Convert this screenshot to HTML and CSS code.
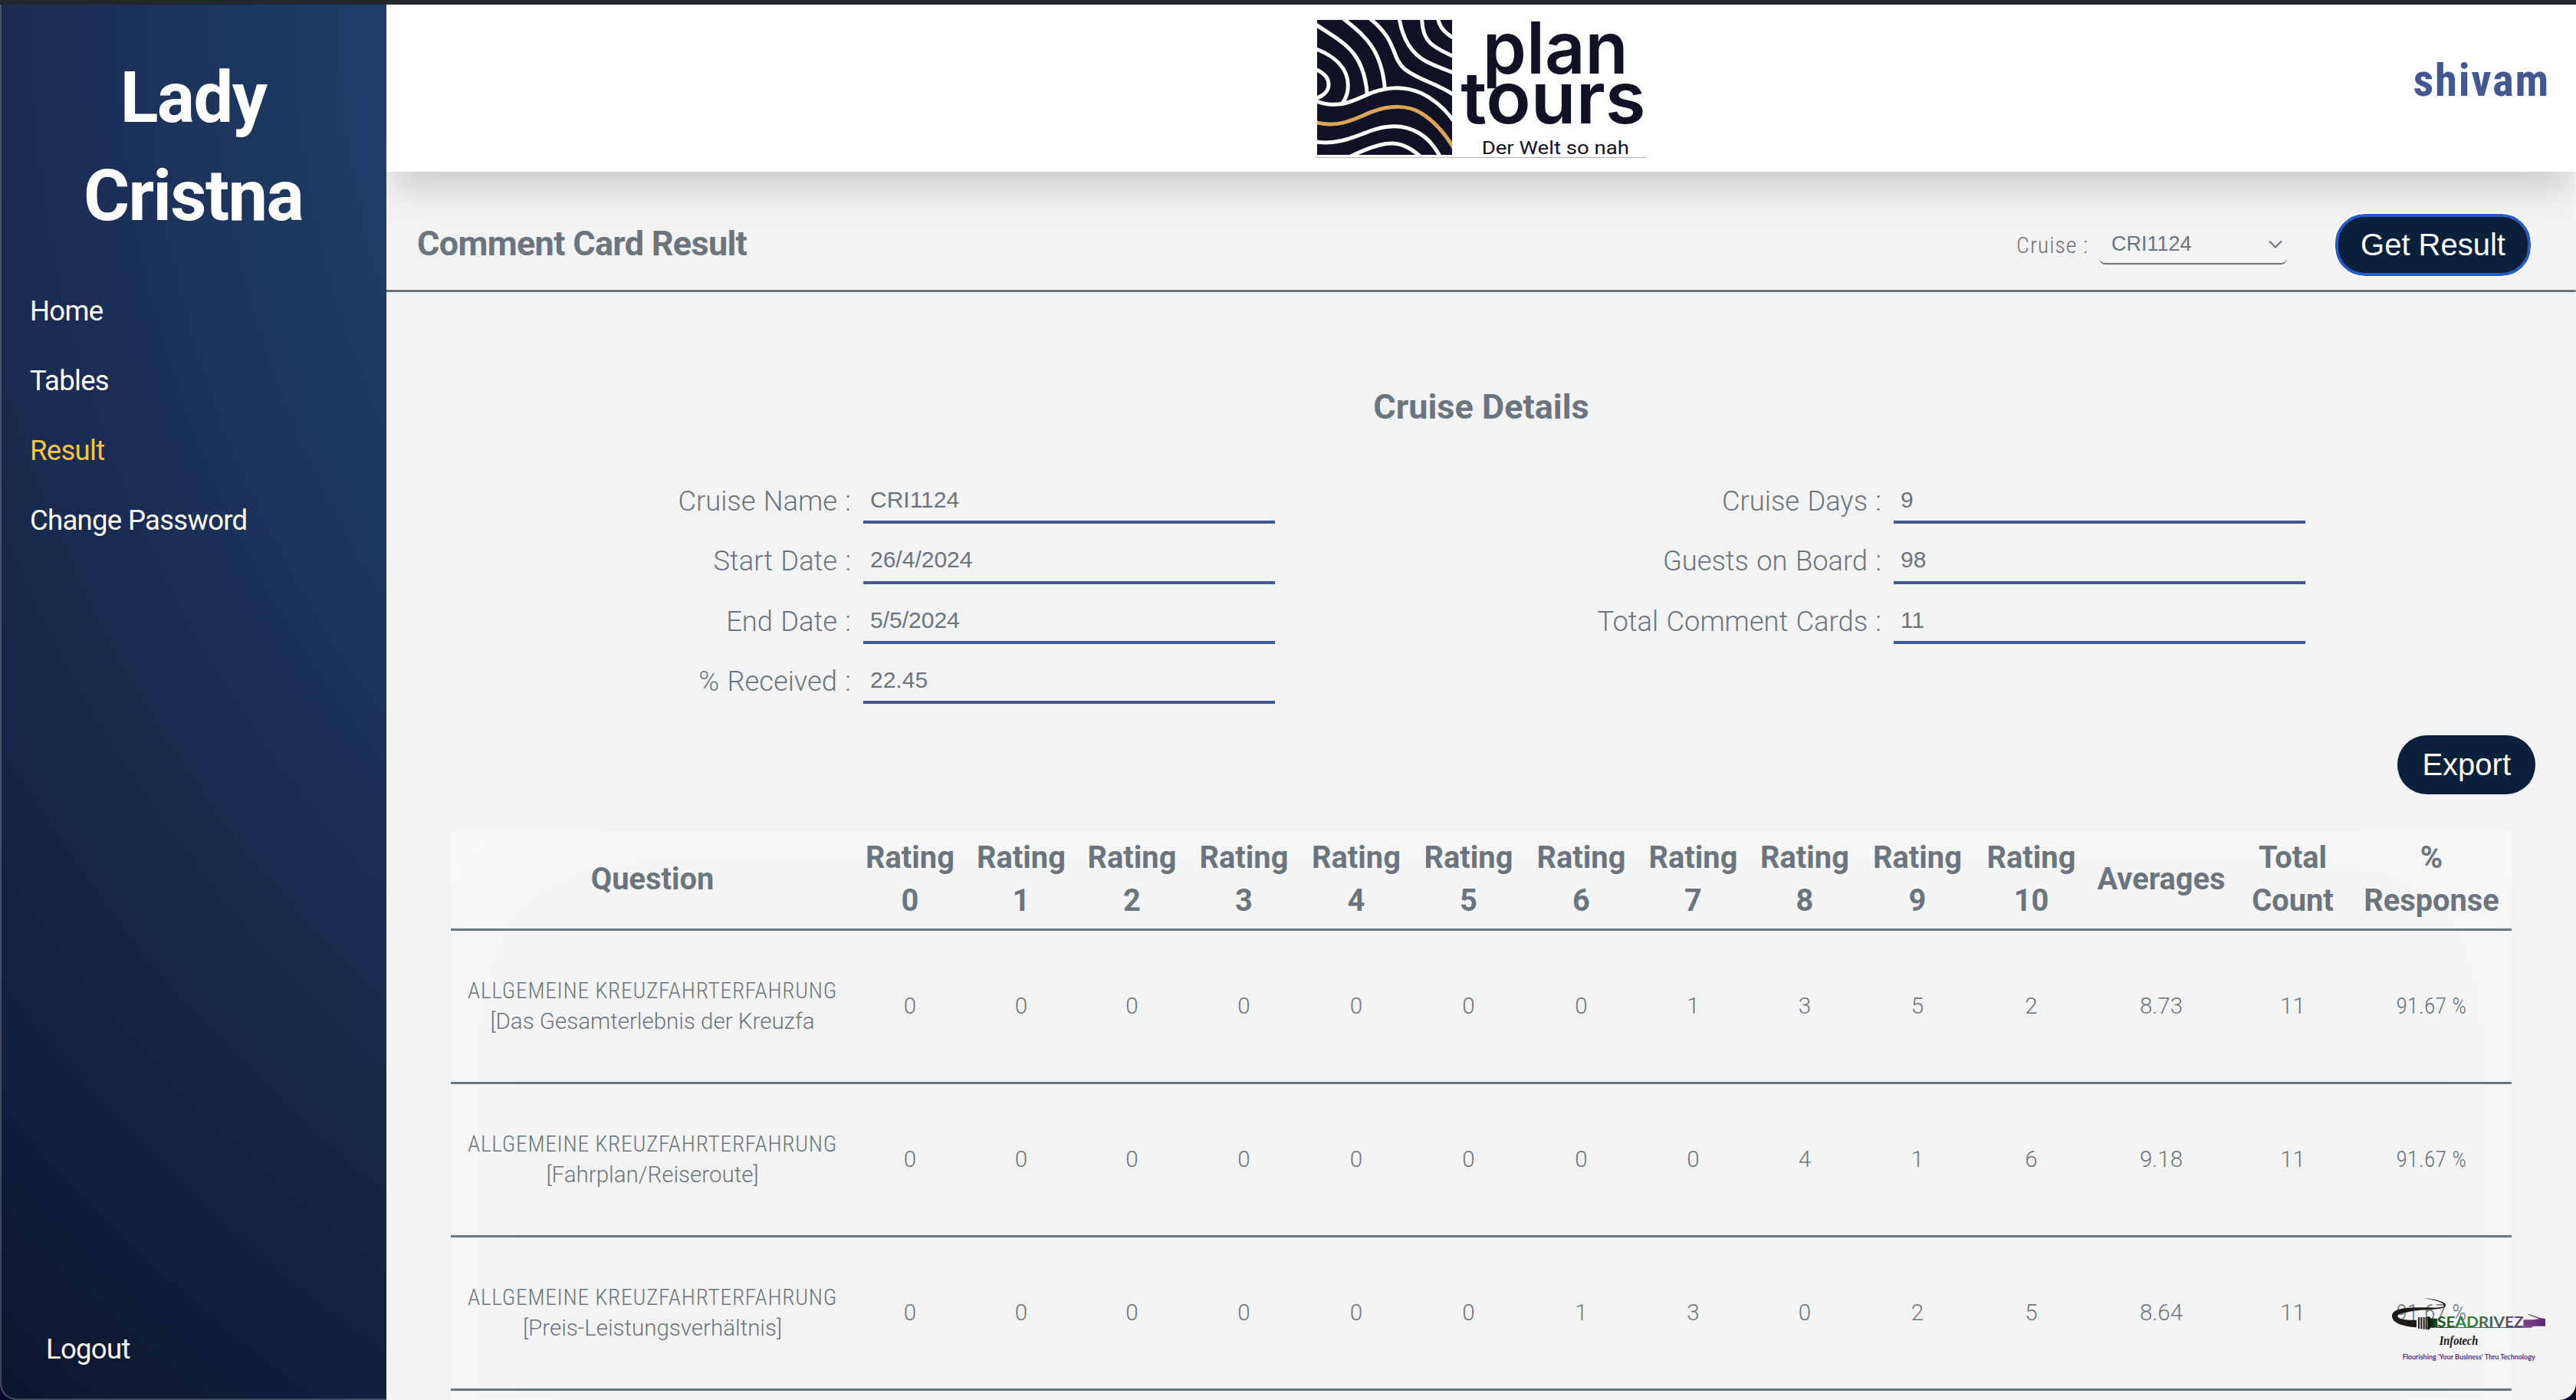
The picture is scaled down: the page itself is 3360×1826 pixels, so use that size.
FILE: index.html
```html
<!DOCTYPE html>
<html lang="en">
<head>
<meta charset="utf-8">
<title>Comment Card Result</title>
<link rel="stylesheet" href="styles.css">
</head>
<body>
<div class="window">
  <aside class="sidebar">
    <h1 class="ship">Lady<br>Cristna</h1>
    <nav class="nav">
      <a class="nav-link">Home</a>
      <a class="nav-link">Tables</a>
      <a class="nav-link active">Result</a>
      <a class="nav-link">Change Password</a>
    </nav>
    <a class="logout">Logout</a>
  </aside>

  <main class="main">
    <header class="header">
      <svg class="logo" viewBox="81 18 1290 654">
        <defs><clipPath id="tile"><rect x="84" y="78" width="528" height="528"/></clipPath></defs>
        <rect x="84" y="78" width="528" height="528" fill="#111226"/>
        <g clip-path="url(#tile)" fill="none" stroke="#fff" stroke-width="15">
          <path d="M76 94C180 165 268 195 280 372"/>
          <path d="M186 72C270 140 335 190 349 345"/>
          <path d="M290 72C400 160 372 222 425 269C485 316 545 322 620 372"/>
          <path d="M405 70C418 150 450 208 510 240C550 260 580 270 620 286"/>
          <path d="M494 70C494 160 530 182 620 222"/>
          <path d="M556 70C563 108 585 130 620 150"/>
          <path d="M76 190C150 218 205 265 205 335C205 365 195 388 182 405"/>
          <path d="M76 270C120 290 129 310 129 332C129 355 110 375 76 386"/>
          <path d="M76 394C175 432 230 390 300 362C370 337 430 337 490 364C540 388 582 422 620 476"/>
          <path d="M76 478C170 505 240 460 300 437C370 411 440 411 490 442C540 472 580 515 620 582" stroke="#dba656"/>
          <path d="M76 554C160 570 240 532 290 513C360 487 425 487 480 519C520 543 540 568 566 614"/>
          <path d="M215 612C290 575 340 560 380 561C420 563 450 580 488 612"/>
        </g>
        <g fill="#111226">
          <text class="word" x="731" y="287" textLength="570" lengthAdjust="spacingAndGlyphs">plan</text>
          <text class="word" x="646" y="483" textLength="724" lengthAdjust="spacingAndGlyphs">tours</text>
          <text class="claim" x="728" y="604" textLength="577" lengthAdjust="spacingAndGlyphs">Der Welt so nah</text>
        </g>
        <rect x="81" y="615" width="1290" height="3" fill="#b4b4b8"/>
      </svg>
      <span class="user">shivam</span>
    </header>

    <section class="toolbar">
      <h2 class="page-title">Comment Card Result</h2>
      <span class="cruise-label">Cruise :</span>
      <div class="select">CRI1124
        <svg class="chevron" viewBox="0 0 18 12"><path d="M1 1.5L9 9.5L17 1.5" fill="none" stroke="#6c757d" stroke-width="2"/></svg>
      </div>
      <button class="btn focused">Get Result</button>
    </section>

    <h3 class="details-title">Cruise Details</h3>
    <div class="details">
      <span class="label">Cruise Name :</span><span class="value">CRI1124</span>
      <span class="label">Cruise Days :</span><span class="value">9</span>
      <span class="label">Start Date :</span><span class="value">26/4/2024</span>
      <span class="label">Guests on Board :</span><span class="value">98</span>
      <span class="label">End Date :</span><span class="value">5/5/2024</span>
      <span class="label">Total Comment Cards :</span><span class="value">11</span>
      <span class="label">% Received :</span><span class="value">22.45</span>
    </div>

    <div class="actions"><button class="btn">Export</button></div>

    <div class="table-wrap">
      <table class="results">
        <colgroup>
          <col class="c-question"><col class="c0"><col class="c1"><col class="c2"><col class="c3"><col class="c4"><col class="c5"><col class="c6"><col class="c7"><col class="c8"><col class="c9"><col class="c10"><col class="c-avg"><col class="c-total"><col class="c-resp">
        </colgroup>
        <thead>
          <tr><th>Question</th><th>Rating<br>0</th><th>Rating<br>1</th><th>Rating<br>2</th><th>Rating<br>3</th><th>Rating<br>4</th><th>Rating<br>5</th><th>Rating<br>6</th><th>Rating<br>7</th><th>Rating<br>8</th><th>Rating<br>9</th><th>Rating<br>10</th><th>Averages</th><th>Total<br>Count</th><th>%<br>Response</th></tr>
        </thead>
        <tbody>
          <tr><td><div class="group">ALLGEMEINE KREUZFAHRTERFAHRUNG</div><div class="item">[Das Gesamterlebnis der Kreuzfa</div></td><td>0</td><td>0</td><td>0</td><td>0</td><td>0</td><td>0</td><td>0</td><td>1</td><td>3</td><td>5</td><td>2</td><td>8.73</td><td>11</td><td class="pct">91.67 %</td></tr>
          <tr><td><div class="group">ALLGEMEINE KREUZFAHRTERFAHRUNG</div><div class="item">[Fahrplan/Reiseroute]</div></td><td>0</td><td>0</td><td>0</td><td>0</td><td>0</td><td>0</td><td>0</td><td>0</td><td>4</td><td>1</td><td>6</td><td>9.18</td><td>11</td><td class="pct">91.67 %</td></tr>
          <tr><td><div class="group">ALLGEMEINE KREUZFAHRTERFAHRUNG</div><div class="item">[Preis-Leistungsverhältnis]</div></td><td>0</td><td>0</td><td>0</td><td>0</td><td>0</td><td>0</td><td>1</td><td>3</td><td>0</td><td>2</td><td>5</td><td>8.64</td><td>11</td><td class="pct">91.67 %</td></tr>
        </tbody>
      </table>
    </div>
  </main>

  <svg class="watermark" viewBox="0 0 720 330">
    <defs>
      <linearGradient id="word" gradientUnits="userSpaceOnUse" x1="237" y1="0" x2="575" y2="0">
        <stop offset="0" stop-color="#154a28"/><stop offset=".33" stop-color="#2f8a42"/><stop offset=".62" stop-color="#3f5f60"/><stop offset="1" stop-color="#6c4784"/>
      </linearGradient>
      <linearGradient id="cuff"><stop offset="0" stop-color="#06120b"/><stop offset="1" stop-color="#17552b"/></linearGradient>
      <linearGradient id="plug"><stop offset="0" stop-color="#80468a"/><stop offset="1" stop-color="#5b2779"/></linearGradient>
    </defs>
    <path fill="#1d1a17" d="M178 39C225 41 276 54 270 70C262 88 180 82 130 92C100 98 80 101 82 112C90 126 130 126 156 125V154C100 150 60 136 60 108C62 84 100 78 150 76C200 75 262 80 264 68C262 56 220 44 178 39Z"/>
    <path fill="#1d1a17" d="M162 115h6v43h-6zM172 114h6v46h-6zM182 114h6v47h-6zM191 113h6v49h-6z"/>
    <path fill="url(#cuff)" d="M199 112L207 112L212 119H238V155H212L204 163H199Z"/>
    <text class="brand" x="237" y="153" textLength="338" lengthAdjust="spacingAndGlyphs" fill="url(#word)">SEADRIVEZ</text>
    <rect x="237" y="153" width="338" height="3" fill="url(#word)"/>
    <path fill="url(#plug)" d="M574 124H610L636 121L592 104L596 102L640 117L660 120V149H612L605 155H574Z"/>
    <text class="script" x="245" y="223" textLength="152" lengthAdjust="spacingAndGlyphs">Infotech</text>
    <text class="tagline" x="101" y="279" textLength="519" lengthAdjust="spacingAndGlyphs">Flourishing 'Your Business' Thru Technology</text>
  </svg>
  <div class="frame"></div>
</div>
</body>
</html>
```
FILE: styles.css
```css
* { box-sizing: border-box; margin: 0; padding: 0; }

body {
  background: #07072a;
  overflow: hidden;
  font-family: Roboto, "Liberation Sans", sans-serif;
  color: #6c757d;
}

.window {
  position: relative;
  display: flex;
  width: 3360px;
  height: 1826px;
  border-top: 6px solid #21272a;
  border-radius: 0 0 22px 22px;
  overflow: hidden;
  background: #f3f3f3;
}

.frame {
  position: absolute;
  z-index: 2;
  inset: 0;
  border: 2px solid rgba(255, 255, 255, .2);
  border-top: 0;
  border-radius: 0 0 22px 22px;
}

/* Sidebar */
.sidebar {
  position: relative;
  z-index: 1;
  display: flex;
  flex-direction: column;
  flex: 0 0 504px;
  padding: 58px 0 36px;
  color: #fff;
  background: radial-gradient(circle 2510px at 1711px 0, #203e6b 48%, #1c375f 55.6%, #1b2d55 66%, #152746 77%, #12203e 87%, #0b152d 100%);
}

.ship {
  font-size: 92px;
  font-weight: 700;
  letter-spacing: -1.6px;
  line-height: 127.5px;
  text-align: center;
}

.nav { display: flex; flex-direction: column; margin-top: 41px; padding-left: 39px; }

.nav-link, .logout { font-size: 36.5px; letter-spacing: -.7px; line-height: 91px; }
.active { color: #f9c440; }
.logout { margin-top: auto; padding-left: 60px; line-height: 60px; }

/* Header */
.main { flex: 1; min-width: 0; overflow: hidden; }

.header {
  display: grid;
  grid-template-columns: 1fr auto 1fr;
  height: 218px;
  background: #fff;
  box-shadow: 0 32px 44px -10px rgba(0, 0, 0, .16);
}

.logo { grid-column: 2; width: 430px; height: 218px; }
.word { font: 600 280px Inter, sans-serif; }
.claim { font: 400 72px Roboto, sans-serif; }

.user {
  justify-self: end;
  margin: 69px 34px 0 0;
  font-size: 59px;
  font-weight: 700;
  font-stretch: 75%;
  letter-spacing: 1.7px;
  line-height: 60px;
  color: #425893;
}

.toolbar {
  display: flex;
  align-items: center;
  height: 157px;
  padding: 37px 59px 0 40px;
  border-bottom: 3px solid #6c757d;
}

.page-title {
  flex: 1;
  margin-bottom: 4px;
  font-size: 45px;
  letter-spacing: -.7px;
  line-height: 60px;
}

.cruise-label { font-size: 30px; font-weight: 300; font-stretch: 75%; letter-spacing: .9px; line-height: 40px; }

.select {
  display: flex;
  justify-content: space-between;
  width: 245px;
  height: 56px;
  margin: 0 63px 5px 14px;
  padding: 9px 6px 0 16px;
  border-bottom: 2px solid #6c757d;
  border-radius: 8px;
  font: 27px/40px "Liberation Sans", sans-serif;
}

.chevron { width: 18px; height: 12px; margin-top: 15px; }

.btn {
  height: 77px;
  padding: 0 32px;
  border: 0;
  border-radius: 38px;
  background: #0b213b;
  color: #fff;
  font: 40px "Liberation Sans", sans-serif;
}

.focused {
  width: 255px;
  height: 81px;
  padding: 0;
  border: 4px solid #265cc8;
  outline: 2px solid #fff;
}

/* Cruise details */
.details-title {
  margin-top: 120px;
  font-size: 45px;
  line-height: 60px;
  text-align: center;
}

.details {
  display: grid;
  grid-template-columns: 606px 537px 775px 537px;
  grid-auto-rows: 78.33px;
  column-gap: 16px;
  margin-top: 44px;
}

.label {
  padding-top: 19px;
  font-size: 36.3px;
  font-weight: 300;
  line-height: 60px;
  text-align: right;
  word-spacing: 1.5px;
}

.value {
  padding: 20px 0 0 9px;
  border-bottom: 4px solid #425893;
  font: 30px/54px "Liberation Sans", sans-serif;
}

.actions { display: flex; justify-content: flex-end; margin-top: 41px; padding-right: 53px; }

/* Results table */
.table-wrap {
  width: 2688px;
  height: 1600px;
  margin: 47px 0 0 84px;
  box-shadow: inset 0 0 360px rgba(255, 255, 255, .6);
}

.results { width: 2688px; table-layout: fixed; border-spacing: 0; text-align: center; }
.results th, .results td { border-bottom: 3px solid #6c757d; }
.results th { height: 131px; font-size: 39.8px; line-height: 56px; }
.results td { height: 200px; padding-bottom: 2px; font-size: 29.5px; font-weight: 300; font-stretch: 88%; line-height: 40px; white-space: nowrap; }
.group { font-stretch: 75%; letter-spacing: .72px; }
.item { font-stretch: 100%; }
.results .pct { font-stretch: 75%; letter-spacing: .3px; }

.c-question { width: 526px; }
.c0, .c4, .c8 { width: 146px; }
.c1 { width: 144px; }
.c2, .c7 { width: 145px; }
.c3, .c5, .c6 { width: 147px; }
.c9 { width: 148px; }
.c10 { width: 149px; }
.c-avg { width: 190px; }
.c-total { width: 153px; }
.c-resp { width: 209px; }

/* Vendor mark, floats above the page */
.watermark { position: absolute; right: 20px; bottom: 36px; width: 240px; height: 110px; }
.brand { font: 700 57px Lato, sans-serif; }
.script { font: italic 700 52px "Liberation Serif", serif; fill: #15120f; }
.tagline { font: 700 27px Lato, sans-serif; fill: #5b2d82; }
```
